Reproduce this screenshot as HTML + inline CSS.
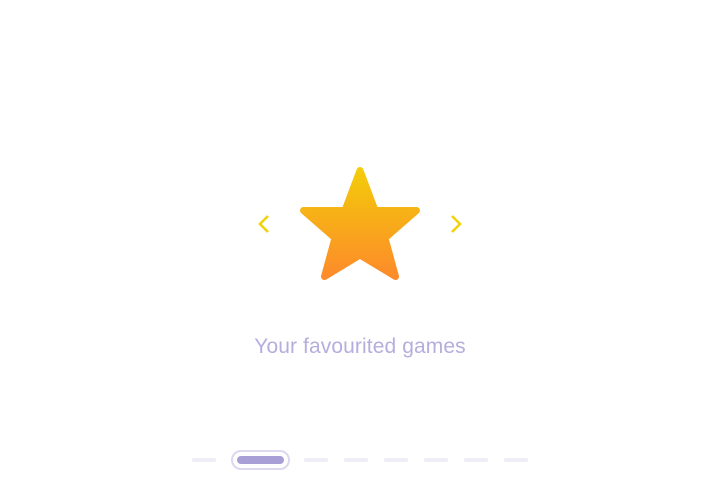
<!DOCTYPE html>
<html><head><style>
body{margin:0;width:720px;height:480px;background:#fff;position:relative;overflow:hidden;font-family:"Liberation Sans",sans-serif}
.t{position:absolute;left:0;width:720px;top:335px;text-align:center;font-size:21px;color:#b5aedd;letter-spacing:0.1px}
.d{position:absolute;top:458px;width:24px;height:4px;border-radius:2px;background:#efeef6}
.p{position:absolute;left:231px;top:450px;width:55px;height:16px;border:2px solid #dcd8f0;border-radius:10px;box-sizing:content-box}
.p div{position:absolute;left:4px;top:4px;width:47px;height:8px;border-radius:4px;background:#a89fd6}
</style></head><body>
<svg width="720" height="480" style="position:absolute;left:0;top:0">
<defs><linearGradient id="g" x1="0" y1="0" x2="0" y2="1"><stop offset="0" stop-color="#f3cb0a"/><stop offset="1" stop-color="#fd8b2a"/></linearGradient></defs>
<path d="M360 170.5 L375 210.5 L416.5 210.5 L385 238 L395.5 276.5 L360 255 L324.5 276.5 L335 238 L303.5 210.5 L345 210.5 Z" fill="url(#g)" stroke="url(#g)" stroke-width="7" stroke-linejoin="round"/>
<path d="M268 216 L260 224 L268 232" fill="none" stroke="#f2d20a" stroke-width="2.6"/>
<path d="M452 216 L460 224 L452 232" fill="none" stroke="#f2d20a" stroke-width="2.6"/>
</svg>
<div class="t">Your favourited games</div>
<div class="d" style="left:192px"></div>
<div class="p"><div></div></div>
<div class="d" style="left:304px"></div>
<div class="d" style="left:344px"></div>
<div class="d" style="left:384px"></div>
<div class="d" style="left:424px"></div>
<div class="d" style="left:464px"></div>
<div class="d" style="left:504px"></div>
</body></html>
